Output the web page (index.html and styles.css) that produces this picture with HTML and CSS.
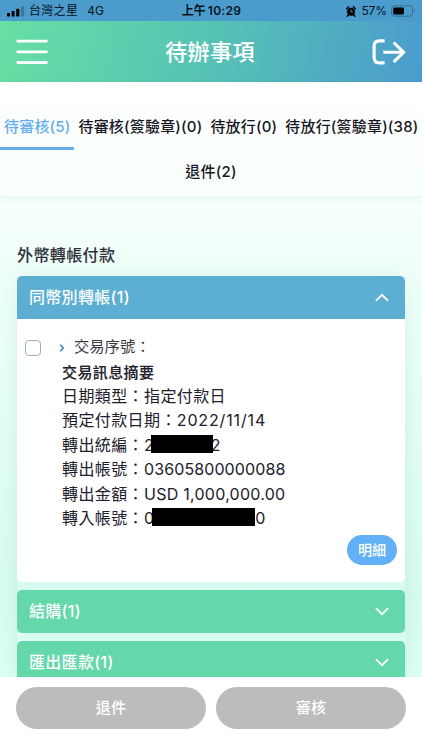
FILE: index.html
```html
<!DOCTYPE html>
<html lang="zh-Hant">
<head>
<meta charset="utf-8">
<meta name="viewport" content="width=device-width">
<title>待辦事項</title>
<link rel="stylesheet" href="styles.css">
</head>
<body>
<div class="app">
  <div class="status">
    <div class="status-left">
      <svg class="signal" width="18" height="11" viewBox="0 0 18 11"><rect x="0" y="7" width="3" height="3.5" rx=".7"/><rect x="4.6" y="5" width="3" height="5.5" rx=".7"/><rect x="9.2" y="2.7" width="3.2" height="7.8" rx=".7"/><rect x="14" y="0" width="3.2" height="10.5" rx=".7" opacity=".22"/></svg>
      <span class="carrier">台灣之星</span><span class="net">4G</span>
    </div>
    <div class="clock">上午<span>10:29</span></div>
    <div class="status-right">
      <svg width="10" height="11" viewBox="0 0 10 11"><circle cx="5" cy="5.8" r="4"/><path d="M.6 2.7 2.7.8M9.4 2.7 7.3.8M2.2 9l-1 1.3M7.8 9l1 1.3" stroke="#000" stroke-width="1.4" stroke-linecap="round"/><path d="M5 3.5V6h2" fill="none" stroke="#4b9ccd" stroke-width=".9"/></svg>
      <span class="percent">57%</span>
      <svg width="25" height="12" viewBox="0 0 25 12"><rect x=".5" y=".8" width="21" height="10.4" rx="3" fill="none" stroke="#28566f" stroke-opacity=".65"/><rect x="2.2" y="2.5" width="10.8" height="7" rx="1.4"/><path d="M23 4.2q1.6 1.8 0 3.6z" fill="#28566f" opacity=".7"/></svg>
    </div>
  </div>
  <header class="header">
    <svg width="32" height="26" viewBox="0 0 32 26"><path d="M1.8 2.1h28.6M1.8 12.9h28.6M1.8 23.5h28.6" stroke="#fff" stroke-width="2.9" stroke-linecap="round"/></svg>
    <h1>待辦事項</h1>
    <svg width="34" height="26" viewBox="0 0 34 26"><path d="M12.6 1.9H7.4Q2.1 1.9 2.1 7.2v11.4q0 5.3 5.3 5.3h5.2M11.3 13.3h20.3M21.6 3.5l10 9.8-10 9.8" fill="none" stroke="#fff" stroke-width="3.1"/></svg>
  </header>
  <nav class="tabs">
    <div class="tab-row">
      <a class="tab active">待審核(5)</a><a class="tab">待審核(簽驗章)(0)</a><a class="tab">待放行(0)</a><a class="tab">待放行(簽驗章)(38)</a>
    </div>
    <div class="tab-row second"><a class="tab">退件(2)</a></div>
  </nav>
  <main class="main">
    <h2>外幣轉帳付款</h2>
    <div class="accordion">
      <section class="group open">
        <div class="group-head"><span>同幣別轉帳(1)</span><svg width="14" height="9" viewBox="0 0 14 9"><path d="M1.4 7.4 7 1.8l5.6 5.6"/></svg></div>
        <div class="group-body">
          <span class="checkbox"></span>
          <div class="detail">
            <div class="serial"><svg width="6" height="8" viewBox="0 0 6 8"><path d="M1.1.8 4.3 4 1.1 7.2"/></svg><span>交易序號：</span></div>
            <div class="summary">交易訊息摘要</div>
            <div class="line">日期類型：指定付款日</div>
            <div class="line">預定付款日期：<span class="num date">2022/11/14</span></div>
            <div class="line">轉出統編：<span class="num">2</span><i class="mask mask-id"></i><span class="num">2</span></div>
            <div class="line">轉出帳號：<span class="num account">03605800000088</span></div>
            <div class="line">轉出金額：<span class="num amount">USD 1,000,000.00</span></div>
            <div class="line">轉入帳號：<span class="num">0</span><i class="mask mask-account"></i><span class="num">0</span></div>
          </div>
          <button class="more">明細</button>
        </div>
      </section>
      <section class="group"><div class="group-head"><span>結購(1)</span><svg width="14" height="9" viewBox="0 0 14 9"><path d="M1.4 1.6 7 7.2l5.6-5.6"/></svg></div></section>
      <section class="group"><div class="group-head"><span>匯出匯款(1)</span><svg width="14" height="9" viewBox="0 0 14 9"><path d="M1.4 1.6 7 7.2l5.6-5.6"/></svg></div></section>
    </div>
  </main>
  <footer class="footer"><button>退件</button><button>審核</button></footer>
</div>
</body>
</html>
```
FILE: styles.css
```css
* { box-sizing: border-box; }
body { margin: 0; font-family: Inter, "Noto Sans CJK TC", sans-serif; color: #20202c; }
svg { display: block; flex: none; }
h1, h2 { margin: 0; }
button { border: 0; padding: 0; color: #fff; font-family: inherit; }
.app { width: 422px; height: 750px; overflow: hidden; display: flex; flex-direction: column; background: #fff; }

.status { height: 21px; flex: none; display: grid; grid-template-columns: 1fr auto 1fr; align-items: center; padding: 1px 6px 0 7px; background: #4b9ccd; color: #06131b; font-size: 12px; line-height: 20px; white-space: nowrap; }
.status-left, .status-right { display: flex; align-items: center; }
.status-right { justify-content: flex-end; }
.carrier { margin-left: 4px; letter-spacing: .3px; }
.net { margin-left: 9px; font-size: 12px; }
.clock { font-weight: 600; font-size: 12px; }
.clock span { margin-left: 2px; letter-spacing: .3px; }
.percent { margin: 0 4px 0 5px; letter-spacing: -.1px; }

.header { height: 61px; flex: none; display: flex; align-items: center; justify-content: space-between; padding: 0 16px; background: linear-gradient(100deg, #67dfa4 0%, #56c2b5 50%, #4b9ccd 100%); }
.header h1 { color: #fff; font-size: 22px; line-height: 32px; font-weight: 500; letter-spacing: .4px; -webkit-text-stroke: .12px; }

.tabs { height: 115px; flex: none; padding-top: 23px; position: relative; background: linear-gradient(#fff, #f8fffd); border-bottom: 1px solid #edf3f1; box-shadow: 0 2px 8px rgba(0, 60, 40, .06); }
.tab-row { display: flex; justify-content: flex-start; height: 45px; font-size: 15px; font-weight: 500; line-height: 44px; letter-spacing: .19px; white-space: nowrap; }
.tab-row.second { justify-content: center; }
.tab { padding: 0 4px; color: #171724; }
.tab.active { color: #64aef0; border-bottom: 3px solid #64aef0; }

.main { flex: 1; min-height: 0; overflow: hidden; padding: 47px 17px 0; background: linear-gradient(#f7fffc 0, #e6fff7 170px, #d7fbee 400px, #dcfff4); }
.main h2 { height: 32px; font-size: 16px; line-height: 22px; font-weight: 500; letter-spacing: .4px; color: #30323a; -webkit-text-stroke: .08px; }
.accordion { display: grid; gap: 8px; box-shadow: 0 0 18px rgba(60, 100, 85, .09); border-radius: 6px; }
.group { overflow: hidden; border-radius: 5px; background: #64d8ab; }
.group.open { height: 306px; background: #fff; }
.group-head { height: 43px; display: flex; justify-content: space-between; align-items: center; padding: 0 16px 0 12px; color: #fff; font-size: 16px; line-height: 41px; font-weight: 500; letter-spacing: .3px; }
.open .group-head { background: #5cafd3; }
.group-head path { fill: none; stroke: #fff; stroke-width: 1.8; stroke-linecap: round; }
.group-body { height: 263px; display: grid; grid-template-columns: 17px 1fr; grid-template-rows: 200px 30px; column-gap: 19px; row-gap: 0; padding: 16px 8px; }
.checkbox { width: 16px; height: 16px; margin-top: 5px; border: 1px solid #a9a9b3; border-radius: 4px; }
.detail { padding-left: 1px; font-size: 16px; line-height: 24.4px; letter-spacing: .4px; white-space: nowrap; }
.serial { display: flex; align-items: center; height: 25px; margin-left: -3px; color: #383840; font-size: 15.3px; letter-spacing: 0; }
.serial svg { margin-right: 9px; }
.serial path { fill: none; stroke: #3c7fc4; stroke-width: 1.5; }
.summary { height: 24px; line-height: 26px; font-size: 15px; font-weight: 500; letter-spacing: .4px; -webkit-text-stroke: .15px; }
.line { height: 24.4px; display: flex; align-items: center; }
.num { letter-spacing: .05px; font-feature-settings: "calt" 0; }
.account { letter-spacing: .1px; }
.date { letter-spacing: .85px; }
.amount { letter-spacing: .26px; }
.mask { flex: none; height: 18px; background: #000; margin-top: -2px; position: relative; }
.mask-id { width: 62px; margin-left: -3px; margin-right: -2px; }
.mask-account { width: 103px; margin-left: -2px; margin-right: 0; }
.more { grid-column: 2; justify-self: end; width: 50px; height: 30px; margin-top: 0; border-radius: 15px; background: #62b1f6; font-size: 14px; line-height: 28px; font-weight: 500; }

.footer { height: 73px; flex: none; display: grid; grid-template-columns: 190px 190px; column-gap: 10px; align-items: start; padding: 10px 16px; background: #fff; }
.footer button { height: 42px; border-radius: 21px; background: #bcbcbc; font-size: 15px; line-height: 40px; font-weight: 500; letter-spacing: .3px; }
```
